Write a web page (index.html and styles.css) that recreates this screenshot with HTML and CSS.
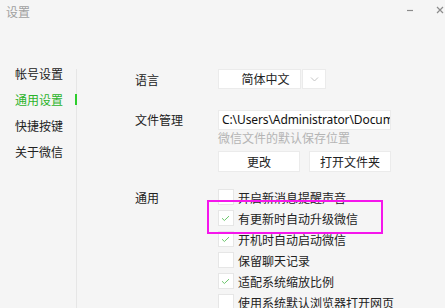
FILE: index.html
```html
<!DOCTYPE html>
<html lang="zh-CN">
<head>
<meta charset="UTF-8">
<title>设置</title>
<link rel="stylesheet" href="styles.css">
</head>
<body>
<div class="window">
  <div class="titlebar">
    <span class="title">设置</span>
    <div class="controls">
      <svg class="ctl" width="8" height="8" viewBox="0 0 8 8"><path d="M1 4.5h6" stroke="#8c8c8c" stroke-width="1.2"/></svg>
      <svg class="ctl" width="8" height="8" viewBox="0 0 8 8"><path d="M1 1l6 6M7 1l-6 6" stroke="#8c8c8c" stroke-width="1.2"/></svg>
    </div>
  </div>

  <div class="main">
    <ul class="sidebar">
      <li>帐号设置</li>
      <li class="active">通用设置</li>
      <li>快捷按键</li>
      <li>关于微信</li>
    </ul>
    <div class="divider"></div>

    <div class="content">
      <div class="row row-lang">
        <div class="label">语言</div>
        <div class="select">
          <div class="select-value">简体中文</div>
          <div class="select-arrow">
            <svg width="9" height="6" viewBox="0 0 9 6"><path d="M1 1.5l3.5 3.5 3.5-3.5" fill="none" stroke="#c4c4c4" stroke-width="1"/></svg>
          </div>
        </div>
      </div>

      <div class="row row-files">
        <div class="label">文件管理</div>
        <div class="field">
          <div class="path">C:\Users\Administrator\Documents\WeChat Files</div>
          <div class="hint">微信文件的默认保存位置</div>
          <div class="buttons">
            <button class="btn">更改</button>
            <button class="btn">打开文件夹</button>
          </div>
        </div>
      </div>

      <div class="row row-general">
        <div class="label">通用</div>
        <ul class="options">
          <li><span class="box"></span>开启新消息提醒声音</li>
          <li><span class="box checked"></span>有更新时自动升级微信</li>
          <li><span class="box checked"></span>开机时自动启动微信</li>
          <li><span class="box"></span>保留聊天记录</li>
          <li><span class="box checked"></span>适配系统缩放比例</li>
          <li><span class="box"></span>使用系统默认浏览器打开网页</li>
          <div class="highlight"></div>
        </ul>
      </div>
    </div>
  </div>
</div>
</body>
</html>
```

FILE: styles.css
```css
body {
  margin: 0;
  padding: 0;
  background-color: #f5f5f5;
  font-family: "Noto Sans CJK SC", "Noto Sans", sans-serif;
  font-size: 12px;
  color: #333;
  overflow: hidden;
}

.window {
  width: 445px;
  height: 308px;
}

.titlebar {
  display: flex;
  justify-content: space-between;
  align-items: center;
  height: 24px;
  padding: 0 1px 0 6px;
}

.title {
  color: #a0a0a0;
  line-height: 24px;
}

.controls {
  display: flex;
  gap: 22px;
  margin-top: -4px;
}

.main {
  display: flex;
  margin-top: 37px;
}

.sidebar {
  list-style: none;
  margin: 0;
  padding: 0;
  width: 76px;
}

.sidebar li {
  position: relative;
  height: 26px;
  line-height: 26px;
  padding-left: 15px;
  color: #222;
}

.sidebar li.active {
  color: #2bb32b;
}

.sidebar li.active::after {
  content: "";
  position: absolute;
  right: -1px;
  top: 7px;
  width: 2px;
  height: 11px;
  background-color: #2ccd2c;
}

.divider {
  width: 1px;
  margin-top: 8px;
  height: 239px;
  background-color: #e6e6e6;
}

.content {
  padding: 8px 0 0 58px;
}

.row {
  display: flex;
}

.label {
  width: 83px;
  flex-shrink: 0;
  color: #222;
}

.row-lang .label {
  line-height: 22px;
}

.select {
  display: flex;
  gap: 1px;
  height: 20px;
}

.select-value,
.select-arrow {
  background-color: #fff;
  border: 1px solid #ebebeb;
  box-sizing: border-box;
  height: 20px;
}

.select-value {
  width: 83px;
  line-height: 18px;
  text-align: center;
  padding-left: 12px;
  box-sizing: border-box;
  color: #222;
}

.select-arrow {
  width: 24px;
  display: flex;
  justify-content: center;
  align-items: center;
}

.row-files {
  margin-top: 19px;
}

.row-files .label {
  line-height: 20px;
}

.path {
  width: 173px;
  height: 20px;
  box-sizing: border-box;
  border: 1px solid #ebebeb;
  background-color: #fff;
  padding-left: 3px;
  font-family: "Noto Sans", sans-serif;
  font-size: 12px;
  letter-spacing: -0.1px;
  line-height: 18px;
  white-space: nowrap;
  overflow: hidden;
  color: #111;
}

.hint {
  line-height: 16px;
  color: #b4b4b4;
}

.buttons {
  display: flex;
  gap: 9px;
  margin-top: 5px;
}

.btn {
  width: 82px;
  height: 21px;
  padding: 0;
  border: 1px solid #ebebeb;
  background-color: #fff;
  font-family: "Noto Sans CJK SC", sans-serif;
  font-size: 12px;
  color: #222;
}

.row-general {
  margin-top: 17px;
}

.row-general .label {
  line-height: 18px;
}

.options {
  position: relative;
  list-style: none;
  margin: 0;
  padding: 0;
  display: flex;
  flex-direction: column;
  gap: 5px;
}

.options li {
  display: flex;
  align-items: center;
  gap: 4px;
  height: 16px;
  color: #222;
}

.box {
  width: 16px;
  height: 16px;
  box-sizing: border-box;
  border: 1px solid #e6e6e6;
  background-color: #fff;
  flex-shrink: 0;
}

.box.checked {
  background: #fff url("data:image/svg+xml;utf8,<svg xmlns='http://www.w3.org/2000/svg' width='16' height='16'><path d='M4 8.2l2.4 2.3 4.6-4.4' fill='none' stroke='%236cc76c' stroke-width='1'/></svg>") no-repeat center;
}

.highlight {
  position: absolute;
  left: -11px;
  top: 11px;
  width: 176px;
  height: 34px;
  box-sizing: border-box;
  border: 2px solid #f516ec;
}
```
